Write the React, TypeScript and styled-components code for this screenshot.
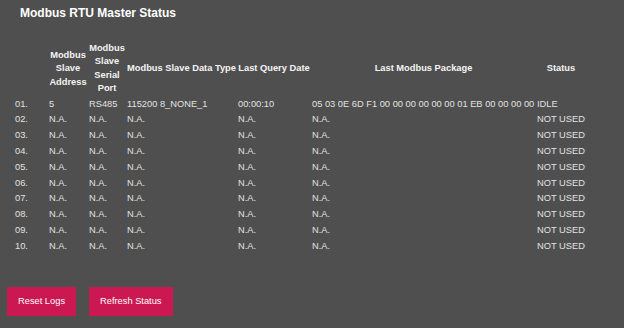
import React from 'react';
import styled, { createGlobalStyle } from 'styled-components';

const GlobalStyle = createGlobalStyle`
    html, body {
        margin: 0;
        padding: 0;
        background: #4f4f4f;
    }
    body {
        font-family: "Liberation Sans", Arial, sans-serif;
        width: 624px;
        height: 328px;
        overflow: hidden;
    }
`;

const Page = styled.div`
    display: flex;
    flex-direction: column;
    align-items: flex-start;
    width: 624px;
    height: 328px;
    background: #4f4f4f;
    color: #e4e4e4;
`;

const Title = styled.h1`
    margin: 6px 0 0 20px;
    font-size: 12px;
    line-height: 14px;
    font-weight: bold;
    color: #ffffff;
`;

const Table = styled.table`
    margin: 20px 0 0 13px;
    border-collapse: separate;
    border-spacing: 2px;
    table-layout: fixed;
    font-size: 9.3px;
`;

const HeadCell = styled.th<{ $w: number }>`
    width: ${p => p.$w}px;
    padding: 0;
    line-height: 13.4px;
    font-weight: bold;
    text-align: center;
    vertical-align: middle;
    color: #f4f4f4;
`;

const Cell = styled.td`
    padding: 0;
    height: 13.8px;
    line-height: 13.8px;
    white-space: nowrap;
    text-align: left;
    vertical-align: middle;
    color: #e2e2e2;
`;

const Actions = styled.div`
    display: flex;
    gap: 13px;
    margin: 31px 0 0 7px;
`;

const Btn = styled.button`
    height: 29px;
    padding: 0 11px;
    border: none;
    border-radius: 0;
    background: #cc1852;
    color: #ffffff;
    font-family: "Liberation Sans", Arial, sans-serif;
    font-size: 9.3px;
    cursor: pointer;
`;

const columns = [
    { label: '', w: 32 },
    { label: 'Modbus Slave Address', w: 38 },
    { label: 'Modbus Slave Serial Port', w: 36 },
    { label: 'Modbus Slave Data Type', w: 109 },
    { label: 'Last Query Date', w: 72 },
    { label: 'Last Modbus Package', w: 223 },
    { label: 'Status', w: 48 },
];

const rows = Array.from({ length: 10 }, (_, i) => {
    const idx = String(i + 1).padStart(2, '0') + '.';
    if (i === 0) {
        return [idx, '5', 'RS485', '115200 8_NONE_1', '00:00:10', '05 03 0E 6D F1 00 00 00 00 00 00 01 EB 00 00 00 00', 'IDLE'];
    }
    return [idx, 'N.A.', 'N.A.', 'N.A.', 'N.A.', 'N.A.', 'NOT USED'];
});

export default function App() {
    return (
        <Page>
            <GlobalStyle />
            <Title>Modbus RTU Master Status</Title>
            <Table>
                <thead>
                    <tr>
                        {columns.map((c, i) => (
                            <HeadCell key={i} $w={c.w}>{c.label}</HeadCell>
                        ))}
                    </tr>
                </thead>
                <tbody>
                    {rows.map((r, i) => (
                        <tr key={i}>
                            {r.map((v, j) => <Cell key={j}>{v}</Cell>)}
                        </tr>
                    ))}
                </tbody>
            </Table>
            <Actions>
                <Btn>Reset Logs</Btn>
                <Btn>Refresh Status</Btn>
            </Actions>
        </Page>
    );
}
